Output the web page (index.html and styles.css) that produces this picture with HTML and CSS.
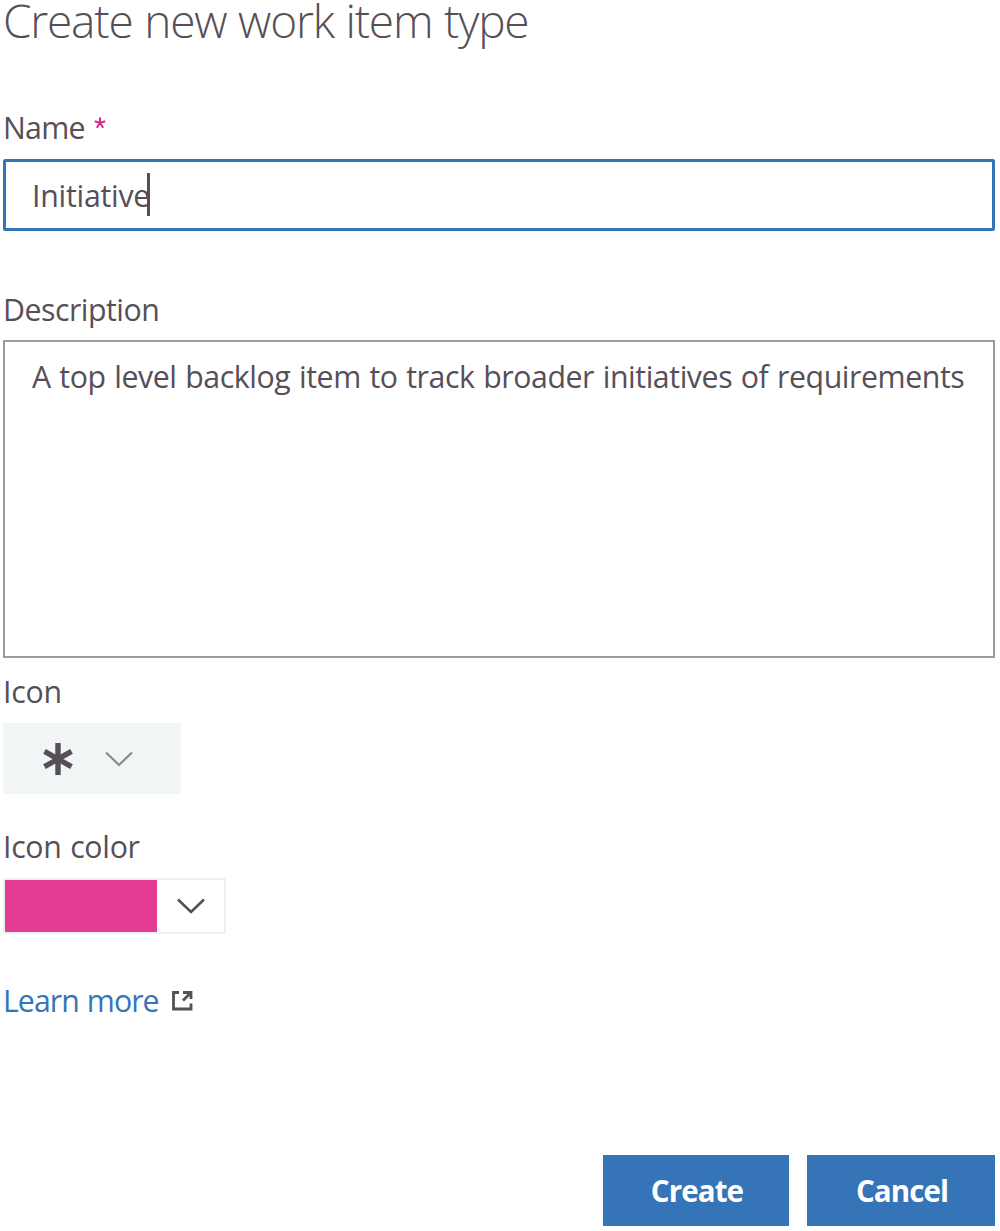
FILE: index.html
```html
<!DOCTYPE html>
<html lang="en">
<head>
<meta charset="utf-8">
<title>Create new work item type</title>
<link rel="stylesheet" href="styles.css">
</head>
<body>
<main class="dialog">
  <h1 class="title">Create new work item type</h1>

  <section class="field field-name">
    <div class="label"><span class="t-name">Name</span><svg class="required" width="12" height="12" viewBox="0 0 12 12"><path d="M6 0.5V6M0.8 4.2L6 6L11.2 4.2M2.8 10.8L6 6L9.2 10.8"/></svg></div>
    <div class="input"><span class="t-initiative">Initiative</span><i class="caret"></i></div>
  </section>

  <section class="field field-description">
    <div class="label"><span class="t-description">Description</span></div>
    <div class="textarea"><span class="t-body">A top level backlog item to track broader initiatives of requirements</span></div>
  </section>

  <section class="field field-icon">
    <div class="label"><span class="t-icon">Icon</span></div>
    <button class="icon-picker" type="button" aria-label="Icon">
      <svg class="asterisk" width="32" height="34" viewBox="0 0 32 34"><path d="M16 1V33M2.5 9.3L29.5 24.7M29.5 9.3L2.5 24.7"/></svg>
      <svg class="chevron light" width="28" height="16" viewBox="0 0 28 16"><path d="M1 1.5L14 14L27 1.5"/></svg>
    </button>
  </section>

  <section class="field field-color">
    <div class="label"><span class="t-color">Icon color</span></div>
    <button class="color-picker" type="button" aria-label="Icon color">
      <span class="swatch"></span>
      <svg class="chevron" width="28" height="16" viewBox="0 0 28 16"><path d="M1 1.5L14 14L27 1.5"/></svg>
    </button>
  </section>

  <div class="learn">
    <a class="t-learn">Learn more</a>
    <svg class="external" width="21" height="20" viewBox="0 0 21 20"><path d="M7 1.5H1.5V18H19V12.5M11 1.5H19V8M18 2.5L11 9.5"/></svg>
  </div>

  <footer class="actions">
    <button class="primary create" type="button"><span>Create</span></button>
    <button class="primary cancel" type="button"><span>Cancel</span></button>
  </footer>
</main>
</body>
</html>
```
FILE: styles.css
```css
* { box-sizing: border-box; }
body {
  margin: 0;
  background: #fff;
  color: #574f57;
  font: 440 30.3px/40px "Open Sans", "Noto Sans", sans-serif;
}
button { border: 0; padding: 0; font: inherit; }
svg { display: block; fill: none; flex: none; }
.dialog { height: 1231px; padding: 0 5px 0 3px; white-space: nowrap; }
.title { margin: 0; height: 40px; font-size: 46px; font-weight: 320; line-height: 41px; letter-spacing: -1.2px; word-spacing: 1px; }
.label { display: flex; height: 40px; padding-top: 2px; }
.field-name { margin-top: 66px; }
.field-description { margin-top: 57px; }
.field-icon { margin-top: 12px; }
.field-color { margin-top: 31px; }

.t-name { width: 82px; letter-spacing: -0.7px; }
.t-initiative { width: 118px; letter-spacing: -0.25px; }
.t-description { letter-spacing: -0.5px; }
.t-body { letter-spacing: -0.43px; word-spacing: 1.2px; }
.t-icon { letter-spacing: -0.2px; }
.t-color { letter-spacing: -0.3px; word-spacing: 1px; }
.t-learn { width: 157px; letter-spacing: -0.95px; word-spacing: 1px; }

.required { margin: 9px 0 0 9px; stroke: #d8278c; stroke-width: 2; }
.input {
  display: flex;
  align-items: center;
  height: 72px;
  margin-top: 13px;
  padding: 1px 0 0 26px;
  border: 3px solid #3474b7;
  border-radius: 2px;
}
.caret { width: 3px; height: 43px; margin: 0 0 3px -3px; background: #574f57; }
.textarea {
  height: 318px;
  margin-top: 12px;
  padding: 15px 0 0 27px;
  border: 2px solid #999ca3;
}
.icon-picker {
  display: flex;
  align-items: center;
  width: 178px;
  height: 71px;
  margin-top: 13px;
  padding-left: 39px;
  background: #f2f5f5;
}
.asterisk { stroke: #574f57; stroke-width: 5.4; }
.chevron { stroke: #574f57; stroke-width: 2.6; }
.light { margin-left: 31px; stroke: #8b898d; stroke-width: 2.2; }
.color-picker {
  display: flex;
  align-items: center;
  width: 223px;
  height: 56px;
  margin-top: 13px;
  border: 2px solid #edf1f1;
  background: #fff;
}
.swatch { width: 152px; height: 52px; margin-right: 20px; background: #e23d92; }
.learn { display: flex; height: 40px; margin-top: 45px; padding-top: 2px; color: #3474b7; }
.external { margin: 10px 0 0 12px; stroke: #574f57; stroke-width: 2.8; }
.actions { display: flex; justify-content: flex-end; gap: 18px; margin-top: 136px; }
.primary { height: 71px; padding-top: 1px; background: #3474b7; color: #fff; font-weight: 680; font-size: 29.5px; letter-spacing: -0.9px; }
.primary span { padding-left: 2px; }
.create { width: 186px; }
.cancel { width: 188px; }
```
